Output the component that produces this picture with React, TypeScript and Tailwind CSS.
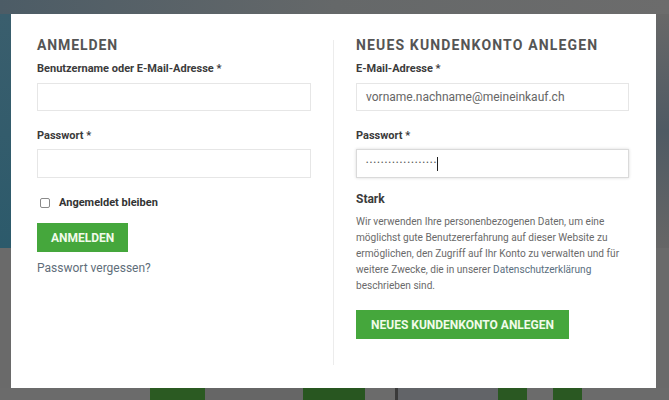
import React from 'react';

const font = { fontFamily: 'Roboto, "Liberation Sans", Arial, sans-serif' };

const Label: React.FC<{ children: React.ReactNode; className?: string }> = ({ children, className = '' }) => (
  <label className={`block text-[11px] leading-[14px] font-bold text-[#3b3b3b] ${className}`}>{children}</label>
);

const Field: React.FC<{ value?: string; className?: string }> = ({ value, className = '' }) => (
  <div className={`h-[28px] border border-[#e6e6e6] bg-white px-[9px] flex items-center text-[12px] text-[#666] ${className}`}>
    {value}
  </div>
);

const GreenButton: React.FC<{ children: React.ReactNode; className?: string }> = ({ children, className = '' }) => (
  <button className={`h-[29px] bg-[#45a73c] text-[#f1fbea] text-[12px] font-bold uppercase px-[14px] ${className}`}>
    {children}
  </button>
);

export default function App() {
  return (
    <div className="relative w-[669px] h-[400px] overflow-hidden bg-[#6a6a6a]" style={font}>
      {/* blurred page behind the overlay */}
      <div className="flex flex-col h-full">
        <div className="h-[14px] bg-gradient-to-r from-[#4c5c66] via-[#656869] to-[#6c6c6c]" />
        <div className="flex h-[234px]">
          <div className="w-[11px] bg-gradient-to-b from-[#3a5e6d] to-[#2c5a6b]" />
          <div className="flex-1" />
          <div className="w-[13px] bg-gradient-to-b from-[#686868] via-[#4f5a63] to-[#666]" />
        </div>
        <div className="flex-1 flex flex-col justify-end">
          <div className="h-[12px] flex bg-[#6b6b6b]">
            <div className="w-[150px]" />
            <div className="w-[55px] bg-[#2b5a22]" />
            <div className="w-[98px] bg-[#666]" />
            <div className="w-[62px] bg-[#285620]" />
            <div className="w-[30px]" />
            <div className="w-[3px] bg-[#3a3a3a]" />
            <div className="w-[100px] bg-[#626468]" />
            <div className="w-[29px] bg-[#2a5822]" />
            <div className="w-[26px]" />
            <div className="w-[29px] bg-[#2a5822]" />
          </div>
        </div>
      </div>

      {/* modal */}
      <div className="absolute left-[11px] top-[14px] w-[645px] h-[374px] bg-white flex pl-[26px] pr-[27px] pt-[23px]">
        <div className="w-[274px]">
          <h2 className="text-[14px] leading-[16px] font-bold tracking-[0.9px] text-[#555]">ANMELDEN</h2>
          <Label className="mt-[9px]">Benutzername oder E-Mail-Adresse *</Label>
          <Field className="mt-[7px]" />
          <Label className="mt-[18px]">Passwort *</Label>
          <Field className="mt-[6px] h-[29px]" />
          <div className="mt-[18px] flex items-center h-[14px]">
            <span className="ml-[3px] w-[10px] h-[10px] border border-[#8a8a8a] rounded-[2px] bg-white" />
            <span className="ml-[9px] text-[11px] font-bold text-[#333]">Angemeldet bleiben</span>
          </div>
          <GreenButton className="mt-[13px]">Anmelden</GreenButton>
          <div className="mt-[8px] text-[12px] leading-[16px] text-[#5f6e7a]">Passwort vergessen?</div>
        </div>

        <div className="mx-[22px] mt-[3px] mb-[23px] w-px bg-[#ececec]" />

        <div className="w-[273px]">
          <h2 className="text-[14px] leading-[16px] font-bold tracking-[1.15px] text-[#555] whitespace-nowrap">NEUES KUNDENKONTO ANLEGEN</h2>
          <Label className="mt-[9px]">E-Mail-Adresse *</Label>
          <Field className="mt-[7px]" value="vorname.nachname@meineinkauf.ch" />
          <Label className="mt-[18px]">Passwort *</Label>
          <div className="mt-[6px] h-[29px] border border-[#dadada] shadow-[0_0_3px_rgba(0,0,0,0.15)] bg-white px-[9px] flex items-center">
            <span className="text-[7px] tracking-[1.4px] text-[#555]">•••••••••••••••••••</span>
            <span className="w-px h-[14px] bg-[#222]" />
          </div>
          <div className="mt-[14px] text-[12px] leading-[15px] font-bold text-[#3b3b3b]">Stark</div>
          <p className="mt-[7px] text-[10.1px] leading-[16px] text-[#6a6a6a]">
            Wir verwenden Ihre personenbezogenen Daten, um eine möglichst gute Benutzererfahrung auf dieser Website zu
            ermöglichen, den Zugriff auf Ihr Konto zu verwalten und für weitere Zwecke, die in unserer{' '}
            <span className="text-[#5b6f80]">Datenschutzerklärung</span> beschrieben sind.
          </p>
          <GreenButton className="mt-[16px] px-[15px]">Neues Kundenkonto anlegen</GreenButton>
        </div>
      </div>
    </div>
  );
}
